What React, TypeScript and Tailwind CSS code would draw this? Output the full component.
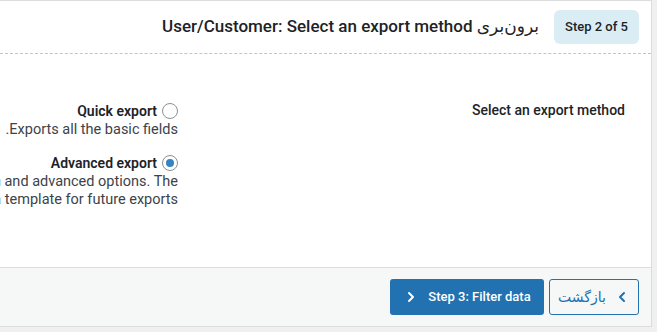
import { ChevronLeft, ChevronRight } from "lucide-react";

function Radio({ checked }: { checked?: boolean }) {
  return (
    <span className="w-4 h-4 shrink-0 rounded-full border border-[#8c8f94] bg-white flex items-center justify-center">
      {checked && <span className="w-2 h-2 rounded-full bg-[#3582c4]" />}
    </span>
  );
}

function ExportWizard() {
  return (
    <div
      dir="rtl"
      className="w-[657px] h-[332px] overflow-hidden bg-[#f0f0f1] text-[#3c434a]"
      style={{ fontFamily: 'Roboto, "DejaVu Sans", sans-serif' }}
    >
      <div className="mr-[5px] -ml-px h-[327px] flex flex-col bg-white border border-[#dcdcde]">
        {/* header */}
        <div className="h-[53px] shrink-0 flex items-center gap-[15px] pr-[12px] border-b border-dashed border-[#c3c4c7]">
          <div className="w-[85px] h-[34px] -mt-[1px] rounded-md bg-[#dbedf4] flex items-center justify-center text-[13px] font-medium text-[#1d2327]">
            Step 2 of 5
          </div>
          <h2 className="text-[17px] font-medium text-[#1d2327] whitespace-nowrap">
            برون‌بری <span dir="ltr">User/Customer: Select an export method</span>
          </h2>
        </div>

        {/* body */}
        <div className="flex-1 flex pt-[48px] overflow-hidden">
          <div className="w-[473px] shrink-0 pr-[26px] text-[14px] font-medium text-[#1d2327] leading-[18px] -mt-[1px]">
            Select an export method
          </div>
          <div className="flex-1 min-w-0 text-[14px] leading-[18px] whitespace-nowrap">
            <div className="flex items-center gap-[5px]">
              <Radio />
              <span className="font-semibold text-[#1d2327]">Quick export</span>
            </div>
            <div className="mt-[1px] text-[14.5px]">Exports all the basic fields.</div>

            <div className="flex items-center gap-[5px] mt-[15px]">
              <Radio checked />
              <span className="font-semibold text-[#1d2327]">Advanced export</span>
            </div>
            <div className="mt-[1px] text-[14.5px]">
              <div>Lets you pick fields, sort order, custom column and advanced options. The</div>
              <div>settings can be saved as a template for future exports</div>
            </div>
          </div>
        </div>

        {/* footer */}
        <div className="h-[59px] shrink-0 bg-[#f6f7f7] border-t border-[#dcdcde] flex items-center gap-[5px] pr-[12px]">
          <button
            type="button"
            className="h-[36px] w-[90px] rounded-[3px] border border-[#2271b1] bg-[#f6f7f7] text-[#2271b1] flex items-center justify-center gap-[8px] text-[14px]"
          >
            <ChevronLeft size={16} strokeWidth={3} />
            <span>بازگشت</span>
          </button>
          <button
            type="button"
            className="h-[36px] w-[154px] rounded-[3px] bg-[#2271b1] text-white flex items-center justify-center gap-[9px] text-[13px] font-medium"
          >
            <span>Step 3: Filter data</span>
            <ChevronRight size={16} strokeWidth={3} />
          </button>
        </div>
      </div>
    </div>
  );
}

export default function App() {
  return <ExportWizard />;
}
